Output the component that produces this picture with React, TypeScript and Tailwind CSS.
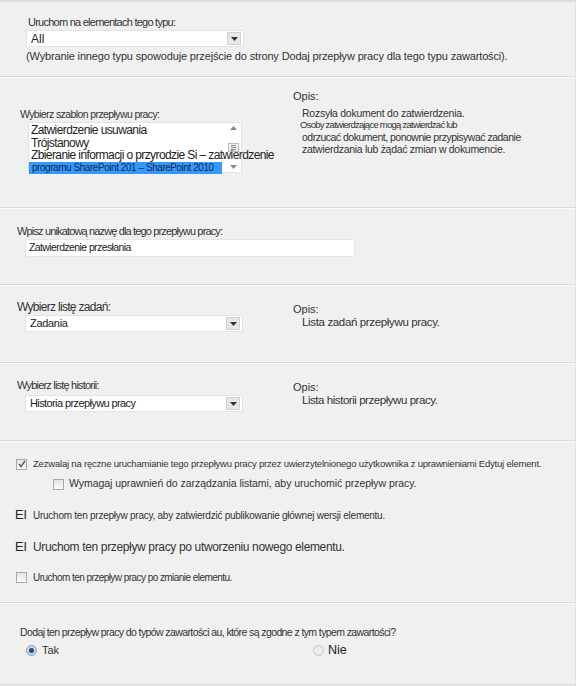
import { ReactNode } from "react";

const font = "font-['Liberation_Sans','Noto_Sans',sans-serif]";

function Section({ h, children }: { h: string; children: ReactNode }) {
    return (
        <div className={`${h} border-b border-[#d9d9d9] shadow-[0_1px_0_#fbfbfb] relative`}>
            {children}
        </div>
    );
}

function DropArrow() {
    return (
        <div className="w-[14px] h-[13px] bg-[#e6e6e6] border border-[#d2d2d2] flex items-center justify-center">
            <svg width="7" height="4" viewBox="0 0 7 4"><path d="M0 0h7L3.5 4z" fill="#333" /></svg>
        </div>
    );
}

function Select({ value, className, textClass }: { value: string; className?: string; textClass?: string }) {
    return (
        <div className={`w-[218px] h-[17px] bg-white border border-[#e2e2e2] flex items-center justify-between pl-[4px] pr-[2px] ${className ?? ""}`}>
            <span className={`text-[#222] leading-none ${textClass ?? "text-[12px]"}`}>{value}</span>
            <DropArrow />
        </div>
    );
}

function Checkbox({ checked }: { checked?: boolean }) {
    return (
        <div className="w-[11px] h-[11px] border border-[#a9a9a9] bg-gradient-to-b from-[#e4e4e4] to-[#fbfbfb] flex items-center justify-center shrink-0">
            {checked && (
                <svg width="8" height="8" viewBox="0 0 8 8"><path d="M1 4l2 2.5L7 1" stroke="#4a5a80" strokeWidth="1.4" fill="none" /></svg>
            )}
        </div>
    );
}

function Radio({ checked }: { checked?: boolean }) {
    return (
        <div className={`w-[11px] h-[11px] rounded-full border ${checked ? "border-[#8aa0b8] bg-[#c8d6e4]" : "border-[#c8c8c8] bg-[#ececec]"} flex items-center justify-center shrink-0`}>
            {checked && <div className="w-[5px] h-[5px] rounded-full bg-[#1f4e86]" />}
        </div>
    );
}

export default function App() {
    return (
        <div className={`w-[576px] h-[686px] bg-[#f0f0f0] text-[#333] ${font} border-t-[2px] border-[#dcdcdc] border-r border-r-[#e2e2e2] overflow-hidden`}>
            <Section h="h-[75px]">
                <div className="pl-[28px] pt-[14px] text-[11px] leading-[13px] tracking-[-0.75px]">Uruchom na elementach tego typu:</div>
                <Select value="All" className="ml-[26px] mt-[1px]" />
                <div className="pl-[26px] pt-[3px] text-[11px] tracking-[-0.15px] leading-[13px]">
                    (Wybranie innego typu spowoduje przejście do strony Dodaj przepływ pracy dla tego typu zawartości).
                </div>
            </Section>

            <Section h="h-[131px]">
                <div className="flex">
                    <div className="w-[273px] shrink-0 pt-[31px] pl-[20px]">
                        <div className="text-[10.5px] leading-[13px] tracking-[-0.6px]">Wybierz szablon przepływu pracy:</div>
                        <div className="ml-[8px] mt-[1px] w-[214px] h-[51px] bg-white border border-[#e2e2e2] relative">
                            <div className="absolute right-0 top-0 bottom-0 w-[15px] bg-white flex flex-col items-center justify-between py-[3px]">
                                <svg width="7" height="4" viewBox="0 0 7 4"><path d="M0 4h7L3.5 0z" fill="#888" /></svg>
                                <div className="w-[11px] h-[9px] border border-[#bbb] bg-[#eee] flex flex-col justify-center gap-[1px] px-[2px]">
                                    <div className="h-px bg-[#888]" /><div className="h-px bg-[#888]" /><div className="h-px bg-[#888]" />
                                </div>
                                <svg width="7" height="4" viewBox="0 0 7 4"><path d="M0 0h7L3.5 4z" fill="#888" /></svg>
                            </div>
                            <div className="relative pt-[1px] pl-[2px] text-[12px] leading-[12.5px] tracking-[-0.6px] text-[#222] whitespace-nowrap">
                                <div>Zatwierdzenie usuwania</div>
                                <div>Trójstanowy</div>
                                <div>Zbieranie informacji o przyrodzie Si – zatwierdzenie</div>
                                <div className="w-[193px] -ml-[2px] pl-[3px] bg-[#3399ff] text-[10px] tracking-[-0.45px] leading-[12px] text-[#1a2a40]">programu SharePoint 201 – SharePoint 2010</div>
                            </div>
                        </div>
                    </div>
                    <div className="pt-[13px] pl-[20px] text-[11px] leading-[12px]">
                        <div>Opis:</div>
                        <div className="pl-[9px] pt-[5px] text-[10.5px] leading-[12px]">
                            <div className="tracking-[-0.25px]">Rozsyła dokument do zatwierdzenia.</div>
                            <div className="-ml-[2px] text-[9.5px] tracking-[-0.75px]">Osoby zatwierdzające mogą zatwierdzać lub</div>
                            <div className="tracking-[-0.5px]">odrzucać dokument, ponownie przypisywać zadanie</div>
                            <div className="tracking-[-0.3px]">zatwierdzania lub żądać zmian w dokumencie.</div>
                        </div>
                    </div>
                </div>
            </Section>

            <Section h="h-[77px]">
                <div className="pl-[17px] pt-[17px] text-[11px] leading-[13px] tracking-[-0.85px]">Wpisz unikatową nazwę dla tego przepływu pracy:</div>
                <div className="ml-[25px] mt-[1px] w-[330px] h-[18px] bg-white border border-[#e6e6e6] flex items-center pl-[3px] text-[10.5px] tracking-[-0.6px] text-[#222]">
                    Zatwierdzenie przesłania
                </div>
            </Section>

            <Section h="h-[78px]">
                <div className="flex">
                    <div className="w-[273px] shrink-0 pl-[17px] pt-[15px]">
                        <div className="text-[12px] leading-[14px] tracking-[-0.7px]">Wybierz listę zadań:</div>
                        <Select value="Zadania" className="ml-[8px] mt-[1px]" textClass="text-[11px] tracking-[-0.3px]" />
                    </div>
                    <div className="pt-[18px] pl-[20px]">
                        <div className="text-[11px] leading-[12px]">Opis:</div>
                        <div className="pl-[9px] pt-[1px] text-[11.5px] leading-[13px] tracking-[-0.35px]">Lista zadań przepływu pracy.</div>
                    </div>
                </div>
            </Section>

            <Section h="h-[78px]">
                <div className="flex">
                    <div className="w-[273px] shrink-0 pl-[17px] pt-[16px]">
                        <div className="text-[11px] leading-[13px] tracking-[-0.8px]">Wybierz listę historii:</div>
                        <Select value="Historia przepływu pracy" className="ml-[8px] mt-[3px]" textClass="text-[11px] tracking-[-0.6px]" />
                    </div>
                    <div className="pt-[18px] pl-[20px]">
                        <div className="text-[11px] leading-[12px]">Opis:</div>
                        <div className="pl-[9px] pt-[1px] text-[11.5px] leading-[13px] tracking-[-0.45px]">Lista historii przepływu pracy.</div>
                    </div>
                </div>
            </Section>

            <Section h="h-[162px]">
                <div className="pt-[17px] pl-[16px] flex flex-col">
                    <div className="flex items-center gap-[6px] h-[12px]">
                        <Checkbox checked />
                        <span className="text-[9.5px] tracking-[-0.2px] whitespace-nowrap">Zezwalaj na ręczne uruchamianie tego przepływu pracy przez uwierzytelnionego użytkownika z uprawnieniami Edytuj element.</span>
                    </div>
                    <div className="flex items-center gap-[5px] h-[12px] mt-[8px] ml-[37px]">
                        <Checkbox />
                        <span className="text-[10.5px] tracking-[-0.05px] whitespace-nowrap">Wymagaj uprawnień do zarządzania listami, aby uruchomić przepływ pracy.</span>
                    </div>
                    <div className="flex items-center h-[14px] mt-[18px] -ml-[1px]">
                        <span className="w-[18px] text-[13px] text-[#222]">El</span>
                        <span className="text-[10px] tracking-[-0.25px] whitespace-nowrap">Uruchom ten przepływ pracy, aby zatwierdzić publikowanie głównej wersji elementu.</span>
                    </div>
                    <div className="flex items-center h-[14px] mt-[18px] -ml-[1px]">
                        <span className="w-[18px] text-[13px] text-[#222]">El</span>
                        <span className="text-[12px] tracking-[-0.35px] whitespace-nowrap">Uruchom ten przepływ pracy po utworzeniu nowego elementu.</span>
                    </div>
                    <div className="flex items-center gap-[6px] h-[12px] mt-[17px]">
                        <Checkbox />
                        <span className="text-[10px] tracking-[-0.55px] whitespace-nowrap">Uruchom ten przepływ pracy po zmianie elementu.</span>
                    </div>
                </div>
            </Section>

            <div className="h-[82px] border-b border-[#d4d4d4]">
                <div className="pl-[20px] pt-[23px] text-[10.5px] leading-[12px] tracking-[-0.6px]">
                    Dodaj ten przepływ pracy do typów zawartości au, które są zgodne z tym typem zawartości?
                </div>
                <div className="flex items-center mt-[3px] pl-[26px]">
                    <div className="flex items-center gap-[5px] w-[287px]">
                        <Radio checked />
                        <span className="text-[11px]">Tak</span>
                    </div>
                    <div className="flex items-center gap-[4px]">
                        <Radio />
                        <span className="text-[12.5px] text-[#222]">Nie</span>
                    </div>
                </div>
            </div>
        </div>
    );
}
